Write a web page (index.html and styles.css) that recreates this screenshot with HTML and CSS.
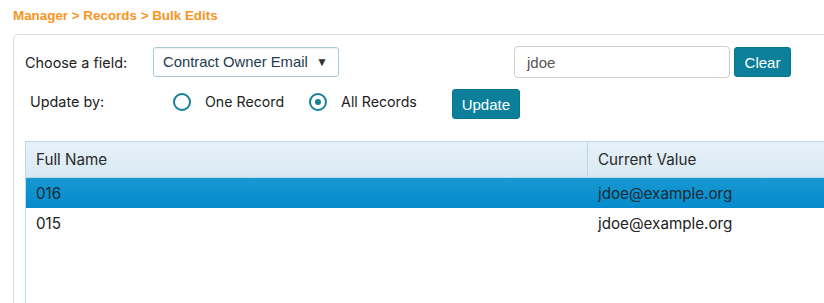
FILE: index.html
```html
<!DOCTYPE html>
<html>
<head>
<meta charset="utf-8">
<link rel="stylesheet" href="styles.css">
</head>
<body>
<div class="crumb">Manager &gt; Records &gt; Bulk Edits</div>
<div class="panel">
  <div class="row row-field">
    <span class="label">Choose a field:</span>
    <div class="select">
      <span>Contract Owner Email</span>
      <span class="caret">&#9660;</span>
    </div>
    <div class="search">jdoe</div>
    <button class="btn btn-clear">Clear</button>
  </div>
  <div class="row row-update">
    <span class="label label2">Update by:</span>
    <span class="radio"></span>
    <span class="rlabel">One Record</span>
    <span class="radio checked"></span>
    <span class="rlabel">All Records</span>
    <button class="btn btn-update">Update</button>
  </div>
  <div class="grid">
    <div class="ghead">
      <div class="c1">Full Name</div>
      <div class="c2">Current Value</div>
    </div>
    <div class="grow selected">
      <div class="c1">016</div>
      <div class="c2">jdoe@example.org</div>
    </div>
    <div class="grow">
      <div class="c1">015</div>
      <div class="c2">jdoe@example.org</div>
    </div>
  </div>
</div>
</body>
</html>
```

FILE: styles.css
```css
html, body {
  margin: 0;
  padding: 0;
  background: #fff;
  overflow: hidden;
  width: 824px;
  height: 303px;
}
body {
  font-family: Inter, "Liberation Sans", sans-serif;
  color: #222;
}
.crumb {
  font-family: "Liberation Sans", Arial, sans-serif;
  font-weight: bold;
  font-size: 13.4px;
  color: #f7941d;
  padding: 8px 0 0 13px;
  height: 18px;
  line-height: 16px;
}
.panel {
  margin: 8px 0 0 13px;
  border: 1px solid #dcdcdc;
  border-right: none;
  border-bottom: none;
  border-top-left-radius: 5px;
  width: 830px;
  height: 269px;
  padding: 11px 0 0 11px;
  box-sizing: border-box;
}
.row {
  display: flex;
  align-items: center;
}
.row-field {
  height: 32px;
}
.label {
  font-size: 14.4px;
  color: #222;
  width: 128px;
  flex: none;
}
.select {
  width: 186px;
  height: 30px;
  box-sizing: border-box;
  border: 1px solid #a9c9dc;
  border-radius: 3px;
  box-shadow: inset 0 1px 1px rgba(0,0,0,0.06);
  display: flex;
  align-items: center;
  justify-content: space-between;
  padding: 0 10px 0 9px;
  font-family: "Liberation Sans", Arial, sans-serif;
  font-size: 14.8px;
  color: #1e3a50;
}
.caret {
  font-size: 12px;
  color: #333;
}
.search {
  margin-left: 175px;
  width: 216px;
  height: 32px;
  box-sizing: border-box;
  border: 1px solid #cfcfcf;
  border-radius: 4px;
  padding: 0 12px;
  display: flex;
  align-items: center;
  font-family: "Liberation Sans", Arial, sans-serif;
  font-size: 15px;
  color: #555;
}
.btn {
  font-family: "Liberation Sans", Arial, sans-serif;
  font-size: 15px;
  color: #fff;
  background: #0c809b;
  border: 1px solid #0a7590;
  border-radius: 3px;
  height: 30px;
  padding: 0;
  box-sizing: border-box;
}
.btn-clear {
  margin-left: 4px;
  width: 57px;
}
.row-update {
  margin-top: 11px;
  height: 30px;
}
.label2 {
  margin-left: 5px;
  width: 143px;
  margin-top: -5px;
}
.radio {
  width: 18px;
  height: 18px;
  box-sizing: border-box;
  border: 2.5px solid #137f98;
  border-radius: 50%;
  flex: none;
  position: relative;
  margin-top: -4px;
}
.radio.checked::after {
  content: "";
  position: absolute;
  left: 3.5px;
  top: 3.5px;
  width: 6px;
  height: 6px;
  border-radius: 50%;
  background: #137f98;
}
.rlabel {
  font-size: 14.2px;
  color: #222;
  margin-left: 14px;
  margin-top: -5px;
}
.rlabel + .radio {
  margin-left: 25px;
}
.btn-update {
  margin-left: 35px;
  width: 68px;
}
.grid {
  margin-top: 22px;
  border: 1px solid #b9d8e8;
  border-right: none;
  border-bottom: none;
  height: 170px;
  font-size: 15.2px;
}
.ghead, .grow {
  display: flex;
}
.ghead {
  height: 35px;
  background: linear-gradient(#e6f1f8, #d9e9f3);
  border-bottom: 1px solid #b9d8e8;
  color: #2a2a2a;
}
.ghead .c1 {
  border-right: 1px solid #b9d8e8;
}
.c1, .c2 {
  display: flex;
  align-items: center;
  padding-left: 10px;
  box-sizing: border-box;
}
.c1 {
  width: 562px;
}
.c2 {
  flex: 1;
}
.grow {
  height: 30px;
  color: #222;
}
.grow.selected {
  background: linear-gradient(#1898d2, #058bcc);
  color: #1b2a33;
}
```
